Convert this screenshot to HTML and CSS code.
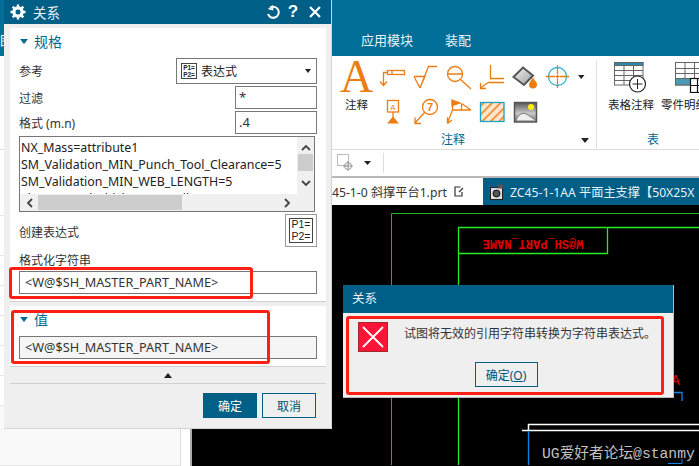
FILE: index.html
```html
<!DOCTYPE html>
<html lang="zh">
<head>
    <meta charset="UTF-8">
    <title>关系</title>
    <link rel="stylesheet" href="styles.css">
</head>
<body>
<div class="app">
    <!-- main window, mostly behind the dialog -->
    <div class="menubar">
        <span class="menu-cut">图</span>
        <span class="menu-item menu-first">应用模块</span>
        <span class="menu-item">装配</span>
    </div>

    <div class="ribbon">
        <div class="ribbon-group group-note">
            <div class="big-tool">
                <span class="big-a">A</span>
                <span class="tool-label">注释</span>
            </div>
            <svg class="note-icons" width="212" height="68" viewBox="379 60 212 68" fill="none" stroke="#ee7d11" stroke-width="1.3">
                <defs>
                    <pattern id="hatch" width="6" height="6" patternUnits="userSpaceOnUse" patternTransform="rotate(-45 0 0) translate(0 0)">
                        <rect width="6" height="6" fill="#fde6cf" stroke="none"/>
                        <line x1="0" y1="0" x2="6" y2="0" stroke="#ee7d11" stroke-width="3"/>
                    </pattern>
                    <linearGradient id="can" x1="0" y1="0" x2="1" y2="1">
                        <stop offset="0" stop-color="#f6f6f6"/>
                        <stop offset="1" stop-color="#9a9a9a"/>
                    </linearGradient>
                    <linearGradient id="photo" x1="0" y1="0" x2="0" y2="1">
                        <stop offset="0" stop-color="#555"/>
                        <stop offset="0.55" stop-color="#c8c8c8"/>
                        <stop offset="1" stop-color="#777"/>
                    </linearGradient>
                </defs>
                <!-- leader note -->
                <rect x="387.5" y="70.5" width="17" height="4"/>
                <path d="M392 70.5V74.5M387.5 72.5H383.5V85M380 81.5L383.5 85.5L387 81.5"/>
                <!-- surface finish -->
                <path d="M414 76.5H425L420 88L428.500 66.500H437"/>
                <path d="M414 76.500L420 88"/>
                <!-- datum circle -->
                <circle cx="455" cy="74" r="7.500"/>
                <path d="M447.500 74H462.500M460.500 79.500L471 89"/>
                <!-- angle -->
                <path d="M490.500 65V78.500H504M488 82.500H504M488 82.500L480.500 88M480.500 83V88.500H486"/>
                <!-- paint -->
                <path d="M523 67.500L533 75.500L524 85L513.500 77Z" fill="url(#can)" stroke="#555" stroke-width="2"/>
                <path d="M533 77.500C535 81 537 82.500 537 84.500A4 4 0 0 1 529 84.500C529 82.500 531 81 533 77.500Z" fill="#ee7d11" stroke="none"/>
                <!-- target -->
                <circle cx="557.500" cy="76.500" r="9" stroke="#25b3d6"/>
                <path d="M546 76.500H555.500M559.500 76.500H569M557.500 65V74.500M557.500 78.500V88M556 76.500H559M557.500 75V78"/>
                <path d="M578 75H584.500L581.250 79Z" fill="#222" stroke="none"/>
                <!-- id symbol -->
                <rect x="387.500" y="100.500" width="11" height="11.500"/>
                <text x="393" y="109.500" class="svg-small" text-anchor="middle">A</text>
                <path d="M393 112V118"/>
                <path d="M387 123.500L393 116.500L399 123.500Z" fill="#ee7d11" stroke="none"/>
                <!-- balloon -->
                <circle cx="430" cy="107" r="7.500"/>
                <text x="430" y="111" class="svg-small svg-seven" text-anchor="middle">7</text>
                <path d="M424.500 112.500L415 123M415 117.500V123.500H421"/>
                <!-- weld -->
                <path d="M452 100L460 103L452 105.500Z" fill="#ee7d11"/>
                <path d="M452.500 100V110L447.500 123M447.500 117.500V123.500M447.500 123.500L452 120M452.500 110H471M461.500 103.500V110M461.500 103.500L471 110"/>
                <!-- hatch -->
                <rect x="480.500" y="102.500" width="23.500" height="19" fill="url(#hatch)" stroke="#14a5c6" stroke-width="1.300"/>
                <!-- image -->
                <rect x="514.500" y="102.500" width="22" height="19.500" fill="url(#photo)" stroke="#555" stroke-width="1.500"/>
                <circle cx="531" cy="107" r="3" fill="#fff000" stroke="none"/>
                <path d="M516 121C518 113 524 112 528 115C531 117 534 119 536 121Z" fill="#eee" stroke="#777" stroke-width="1"/>
            </svg>
            <div class="group-title group-title-note">注释</div>
            <svg class="group-more" width="8" height="5" viewBox="0 0 8 5"><path d="M0 0H8L4 5Z" fill="#222"/></svg>
        </div>
        <div class="ribbon-group group-table">
            <div class="table-tool">
                <svg width="34" height="32" viewBox="614 61 34 32" fill="none" stroke="#666" stroke-width="1">
                    <rect x="614.500" y="62.500" width="28.500" height="22.500" fill="#fff"/>
                    <rect x="614.500" y="62.500" width="28.500" height="3" fill="#2c88a8"/>
                    <path d="M614.500 70.500H643M614.500 75.500H643M614.500 80.500H643M624 65.500V85M633.500 65.500V85"/>
                    <circle cx="637.500" cy="84" r="8" fill="#fff" stroke="#222" stroke-width="1.200"/>
                    <path d="M632.500 84H642.500M637.500 79V89" stroke="#222"/>
                </svg>
                <span class="tool-label">表格注释</span>
            </div>
            <div class="table-tool parts-tool">
                <svg width="29" height="32" viewBox="671 61 29 32" fill="none" stroke="#666" stroke-width="1">
                    <rect x="671.500" y="62.500" width="29" height="22.500" fill="#fff"/>
                    <path d="M671.500 68.500H700M671.500 73.500H700M671.500 78.500H700M681 62.500V85M690.500 62.500V85"/>
                    <rect x="671.500" y="78.500" width="29" height="6.500" fill="#4a9ab5"/>
                    <rect x="686.500" y="78.500" width="14" height="14" fill="#fff" stroke="#111" stroke-width="1.200"/>
                    <path d="M686.500 85.500H700M693.500 78.500V92.500" stroke="#111" stroke-width="1.200"/>
                </svg>
                <span class="tool-label">零件明细表</span>
            </div>
            <div class="group-title group-title-table">表</div>
        </div>
    </div>

    <div class="toolbar">
        <svg class="snap-icon" width="18" height="18" viewBox="0 0 18 18" fill="none" stroke="#bbb">
            <rect x="0.500" y="0.500" width="11" height="11"/>
            <circle cx="11" cy="12" r="3.500" stroke="#999"/>
            <path d="M11 7V17M6 12H16" stroke="#999"/>
        </svg>
        <svg class="snap-arrow" width="7" height="4" viewBox="0 0 7 4"><path d="M0 0H7L3.500 4Z" fill="#222"/></svg>
        <span class="toolbar-sep"></span>
    </div>

    <div class="tabs">
        <div class="tab">
            <span>45-1-0 斜撑平台1.prt</span>
            <svg class="tab-icon" width="10" height="11" viewBox="0 0 10 11" fill="none" stroke="#333" stroke-width="1.200"><path d="M6.500 1H1V10H8V6M5 6L9 2"/></svg>
        </div>
        <div class="tab tab-active">
            <svg class="tab-icon" width="14" height="16" viewBox="0 0 14 16">
                <rect x="0.500" y="3.500" width="12" height="12" fill="#ddd" stroke="#222"/>
                <rect x="8" y="0.500" width="5" height="4" fill="#555"/>
                <circle cx="6.500" cy="9.500" r="3.500" fill="#555" stroke="#111"/>
            </svg>
            <span class="tab-name">ZC45-1-1AA 平面主支撑【50X25X</span>
        </div>
    </div>

    <div class="workspace">
        <div class="sidebar">
            <div class="side-list">
                <div class="side-row side-row-tall"></div>
                <div class="side-row side-row-tall"></div>
                <div class="side-row"></div>
                <div class="side-row"></div>
                <div class="side-row"></div>
                <div class="side-row"></div>
                <div class="side-row"></div>
                <div class="side-row side-row-last"></div>
            </div>
        </div>
        <svg class="drawing" width="507" height="261" viewBox="192 205 507 261" fill="none">
            <path d="M391.500 466V214.500H699" stroke="#1fb51f" stroke-width="1"/>
            <path d="M458.500 466V228.500H699M458.500 254.500H607.500V228.500" stroke="#22ee22" stroke-width="1.300"/>
            <text x="533" y="241" class="cad-title" text-anchor="middle" transform="rotate(180 533 241)">W@SH_PART_NAME</text>
            <text x="671" y="386" class="cad-a">A</text>
            <path d="M668 393.500H682V402" stroke="#0a84e6" stroke-width="1.300"/>
            <path d="M522 431.500H699M528.500 431V425.500H699" stroke="#fff" stroke-width="1.500"/>
            <path d="M528.500 432V466" stroke="#0a84e6" stroke-width="1.300"/>
            <path d="M668 464.500H682V460" stroke="#0a84e6" stroke-width="1"/>
            <text x="542" y="459" class="cad-credit">UG爱好者论坛@stanmy</text>
        </svg>
    </div>
</div>

<!-- relations dialog -->
<div class="dialog">
    <div class="dialog-title">
        <svg class="gear" width="16" height="16" viewBox="0 0 16 16">
            <path d="M8 2.200A5.800 5.800 0 1 0 8 13.800A5.800 5.800 0 1 0 8 2.200ZM8 5.500A2.500 2.500 0 1 1 8 10.500A2.500 2.500 0 1 1 8 5.500Z" fill="#fff" fill-rule="evenodd"/>
            <path d="M8 0.500V3M8 13V15.500M0.500 8H3M13 8H15.500M2.700 2.700L4.400 4.400M11.600 11.600L13.300 13.300M2.700 13.300L4.400 11.600M11.600 4.400L13.300 2.700" stroke="#fff" stroke-width="2.400"/>
        </svg>
        <span class="dialog-name">关系</span>
        <svg class="reset" width="14" height="14" viewBox="0 0 14 14" fill="none" stroke="#fff" stroke-width="2">
            <path d="M4 2.800A5.500 5.500 0 1 1 2 9"/>
            <path d="M6.500 0.500L6.500 4.500L2.500 3.500" stroke-width="1.500"/>
        </svg>
        <span class="help">?</span>
        <svg class="close" width="12" height="12" viewBox="0 0 12 12" stroke="#fff" stroke-width="2.200"><path d="M1 1L11 11M11 1L1 11"/></svg>
    </div>

    <div class="dialog-body">
        <div class="section section-spec">
            <div class="section-head"><i class="caret"></i>规格</div>
            <div class="row row-select">
                <label>参考</label>
                <div class="select">
                    <span class="p-icon">P1=<br>P2=</span>
                    <span class="select-text">表达式</span>
                    <i class="select-arrow"></i>
                </div>
            </div>
            <div class="row">
                <label>过滤</label>
                <div class="field field-short">*</div>
            </div>
            <div class="row">
                <label>格式 (m.n)</label>
                <div class="field field-short">.4</div>
            </div>
            <div class="listbox">
                <div class="list-lines">
                    <div>NX_Mass=attribute1</div>
                    <div>SM_Validation_MIN_Punch_Tool_Clearance=5</div>
                    <div>SM_Validation_MIN_WEB_LENGTH=5</div>
                    <div>Sheet_Metal_Thickness=attribute1</div>
                </div>
                <div class="vscroll">
                    <svg width="10" height="7" viewBox="0 0 10 7" fill="none" stroke="#444" stroke-width="1.800"><path d="M1 6L5 2L9 6"/></svg>
                    <div class="vthumb"></div>
                    <svg width="10" height="7" viewBox="0 0 10 7" fill="none" stroke="#444" stroke-width="1.800"><path d="M1 1L5 5L9 1"/></svg>
                </div>
                <div class="hscroll">
                    <svg width="7" height="10" viewBox="0 0 7 10" fill="none" stroke="#444" stroke-width="1.800"><path d="M6 1L2 5L6 9"/></svg>
                    <div class="hthumb"></div>
                    <svg width="7" height="10" viewBox="0 0 7 10" fill="none" stroke="#444" stroke-width="1.800"><path d="M1 1L5 5L1 9"/></svg>
                </div>
            </div>
            <div class="row row-create">
                <label>创建表达式</label>
                <div class="create-btn"><span class="p-icon p-icon-big">P1=<br>P2=</span></div>
            </div>
            <div class="field-label">格式化字符串</div>
            <div class="field">&lt;W@$SH_MASTER_PART_NAME&gt;</div>
        </div>

        <div class="section section-value">
            <div class="section-head section-head-value"><i class="caret"></i>值</div>
            <div class="field field-readonly">&lt;W@$SH_MASTER_PART_NAME&gt;</div>
        </div>

        <div class="collapse"><i class="collapse-arrow"></i></div>

        <div class="dialog-buttons">
            <button class="btn btn-primary">确定</button>
            <button class="btn">取消</button>
        </div>
    </div>
</div>

<!-- message box -->
<div class="alert">
    <div class="alert-title">关系</div>
    <div class="alert-body">
        <div class="alert-main">
            <svg class="alert-icon" width="30" height="30" viewBox="0 0 30 30">
                <rect x="0.500" y="0.500" width="29" height="29" fill="#ff1439" stroke="#a32a2a"/>
                <path d="M5 5L25 25M25 5L5 25" stroke="#fff" stroke-width="1.800"/>
            </svg>
            <div class="alert-text">试图将无效的引用字符串转换为字符串表达式。</div>
        </div>
        <button class="btn alert-btn">确定(<u>O</u>)</button>
    </div>
</div>

<!-- red marks drawn on the screenshot -->
<div class="mark mark-format"></div>
<div class="mark mark-value"></div>
<div class="mark mark-alert"></div>
</body>
</html>
```

FILE: styles.css
```css
/* Global */
* {
    box-sizing: border-box;
}
html, body {
    margin: 0;
    height: 100%;
}
body {
    position: relative;
    width: 699px;
    height: 466px;
    overflow: hidden;
    font-family: "Noto Sans", "Noto Sans CJK SC", sans-serif;
    font-size: 12px;
    color: #333;
    background: #000;
}

/* Main window */
.app {
    display: flex;
    flex-direction: column;
    height: 466px;
}
.menubar {
    display: flex;
    align-items: flex-end;
    flex: 0 0 56px;
    padding-bottom: 7px;
    background: #006e96;
    color: #e8f2f6;
    font-size: 13px;
    line-height: 18px;
    overflow: hidden;
}
.menu-cut {
    width: 4px;
    overflow: hidden;
    color: #fff;
    white-space: nowrap;
    margin-right: 357px;
}
.menu-item {
    margin-right: 32px;
}

/* Ribbon */
.ribbon {
    display: flex;
    flex: 0 0 94px;
    background: #fff;
    border-bottom: 1px solid #ddd;
}
.ribbon-group {
    position: relative;
    display: flex;
    height: 88px;
    margin-top: 5px;
}
.group-note {
    width: 597px;
    padding-left: 334px;
    border-right: 1px solid #ddd;
}
.group-table {
    flex: 1;
    overflow: hidden;
}
.big-tool {
    display: flex;
    flex-direction: column;
    align-items: center;
    width: 45px;
}
.big-a {
    height: 32px;
    font-family: "Liberation Serif", serif;
    font-size: 46px;
    line-height: 32px;
    color: #ee7d11;
}
.big-tool .tool-label {
    margin-top: 4px;
}
.tool-label {
    font-size: 11.500px;
    line-height: 16px;
    color: #222;
    white-space: nowrap;
}
.note-icons {
    margin-top: -1px;
}
.group-title {
    position: absolute;
    top: 71px;
    font-size: 12px;
    line-height: 16px;
    color: #00698f;
}
.group-title-note {
    left: 441px;
}
.group-title-table {
    left: 50px;
}
.group-more {
    position: absolute;
    left: 581px;
    top: 77px;
}
.table-tool {
    display: flex;
    flex-direction: column;
    align-items: center;
    width: 68px;
    margin-left: -1px;
}
.table-tool svg {
    margin-bottom: 4px;
}
.group-table .table-tool:first-child {
    margin-left: 0;
}
.table-tool:first-child {
    padding-left: 0;
    flex: 0 0 68px;
}
.table-tool:first-child svg {
    margin-left: 0;
}
.parts-tool {
    align-items: flex-start;
    flex: 0 0 60px;
}
.parts-tool svg {
    margin-left: 11px;
}
.parts-tool .tool-label {
    margin-left: -3px;
}

/* Small toolbar */
.toolbar {
    display: flex;
    align-items: center;
    flex: 0 0 28px;
    padding-left: 337px;
    background: #fff;
    border-bottom: 2px solid #b9b9b9;
}
.snap-arrow {
    margin-left: 9px;
}
.toolbar-sep {
    width: 1px;
    height: 20px;
    margin-left: 12px;
    background: #ddd;
}

/* Document tabs */
.tabs {
    display: flex;
    flex: 0 0 27px;
    padding-left: 332px;
    background: #005f87;
    font-size: 12.200px;
    white-space: nowrap;
}
.tab {
    display: flex;
    align-items: center;
    gap: 7px;
    width: 151px;
    padding-left: 0;
    background: #fff;
    color: #333;
    overflow: hidden;
}
.tab-active {
    flex: 1;
    gap: 6px;
    padding-left: 7px;
    background: #005f87;
    color: #e6f1f5;
}
.tab-icon {
    flex: none;
}

/* Area under the tabs */
.workspace {
    display: flex;
    flex: 1;
    min-height: 0;
    margin-top: -1px;
}
.sidebar {
    flex: 0 0 192px;
    margin-top: -28px;
    padding-right: 9px;
    background: #fff;
    border-right: 2px solid #aaa;
}
.side-list {
    height: 100%;
    border-right: 1px solid #ddd;
}
.side-row {
    height: 30px;
    border-bottom: 1px solid #e6e6e6;
}
.side-row-tall {
    height: 40px;
}
.side-row-last {
    background: #f9f9f9;
    height: 60px;
}
.drawing {
    display: block;
    flex: 1;
}
.cad-title {
    font-family: "Liberation Mono", monospace;
    font-size: 12px;
    font-weight: bold;
    fill: #e00000;
}
.cad-a {
    font-family: "Liberation Mono", monospace;
    font-size: 15px;
    fill: #e00000;
}
.cad-credit {
    font-family: "Liberation Mono", "Noto Sans CJK SC", monospace;
    font-size: 14.700px;
    fill: #c0c0c0;
}
.svg-small {
    font-family: "Liberation Sans", sans-serif;
    font-size: 8px;
    fill: #ee7d11;
    stroke: none;
}
.svg-seven {
    font-size: 11px;
    font-weight: bold;
}

/* Relations dialog */
.dialog {
    position: absolute;
    left: 4px;
    top: 0;
    width: 328px;
    height: 429px;
    background: #efefef;
    border-right: 1px solid #d4d4d4;
    border-bottom: 1px solid #d4d4d4;
}
.dialog-title {
    display: flex;
    align-items: center;
    height: 24px;
    padding-left: 6px;
    background: #005f87;
    color: #e8f2f6;
}
.dialog-name {
    margin-left: 7px;
    font-size: 13.500px;
}
.reset {
    margin-left: auto;
}
.help {
    width: 12px;
    margin-left: 7px;
    font-family: "Liberation Sans", sans-serif;
    font-size: 17px;
    font-weight: bold;
    line-height: 24px;
    text-align: center;
    color: #fff;
}
.close {
    margin: 0 10px 0 10px;
}
.dialog-body {
    padding: 4px 5px 0 6px;
}
.section {
    padding: 0 9px 7px;
    background: #fff;
    border-bottom: 1px solid #d0d0d0;
}
.section-head {
    display: flex;
    align-items: center;
    height: 26px;
    margin-bottom: 4px;
    font-size: 14px;
    color: #00698f;
}
.caret {
    width: 0;
    height: 0;
    margin: 0 6px 0 1px;
    border-left: 4.500px solid transparent;
    border-right: 4.500px solid transparent;
    border-top: 5px solid #00698f;
}
.row {
    display: flex;
    align-items: center;
    justify-content: space-between;
    height: 23px;
    margin-bottom: 2px;
    font-size: 12px;
    color: #333;
}
.row-select {
    height: 26px;
}
.select {
    display: flex;
    align-items: center;
    width: 141px;
    height: 26px;
    padding-left: 4px;
    border: 1px solid #777;
    background: #fff;
}
.p-icon {
    display: block;
    width: 16px;
    height: 16px;
    border: 1px solid #444;
    font-family: "Liberation Sans", sans-serif;
    font-size: 6.500px;
    font-weight: bold;
    line-height: 7px;
    color: #222;
    text-align: center;
}
.select-text {
    margin-left: 4px;
    color: #222;
}
.select-arrow {
    margin-left: auto;
    margin-right: 5px;
    border-left: 3.500px solid transparent;
    border-right: 3.500px solid transparent;
    border-top: 4px solid #222;
}
.field {
    height: 23px;
    padding: 0 5px;
    border: 1px solid #777;
    background: #fff;
    font-size: 12.700px;
    line-height: 21px;
    color: #333;
    white-space: nowrap;
}
.field-short {
    width: 82px;
    padding: 0 3px;
    font-size: 13px;
}

.field-readonly {
    background: #f5f5f5;
}

/* Expression list */
.listbox {
    display: grid;
    grid-template-columns: 1fr 17px;
    grid-template-rows: 57px 17px;
    width: 296px;
    height: 76px;
    margin-bottom: 2px;
    border: 1px solid #777;
    background: #f0f0f0;
}
.list-lines {
    padding: 2px 0 0 1px;
    overflow: hidden;
    background: #fff;
    font-size: 12.400px;
    line-height: 17px;
    color: #222;
    white-space: nowrap;
}
.vscroll {
    display: flex;
    flex-direction: column;
    align-items: center;
    padding-top: 7px;
}
.vthumb {
    width: 15px;
    height: 17px;
    margin: 3px 0 9px;
    background: #cdcdcd;
}
.hscroll {
    display: flex;
    align-items: center;
    grid-column: 1 / 3;
    padding-left: 6px;
}
.hthumb {
    width: 144px;
    height: 15px;
    margin: 0 102px 0 5px;
    background: #cdcdcd;
}
.row-create {
    height: 33px;
    margin-bottom: 4px;
}
.row-create label {
    margin-top: 2px;
}
.create-btn {
    width: 32px;
    height: 33px;
    padding: 3px;
    border: 1px solid #999;
    background: #fff;
}
.p-icon-big {
    width: 24px;
    height: 25px;
    font-size: 10.500px;
    font-weight: normal;
    line-height: 11.500px;
}
.field-label {
    height: 20px;
    font-size: 12px;
    line-height: 19px;
    color: #333;
}
.section-value {
    margin-top: 4px;
}
.section-head-value {
    margin-bottom: 4px;
}
.collapse {
    display: flex;
    align-items: center;
    justify-content: center;
    height: 17px;
    border-bottom: 1px solid #cfcfcf;
}
.collapse-arrow {
    border-left: 4.500px solid transparent;
    border-right: 4.500px solid transparent;
    border-top: 0;
    border-bottom: 5px solid #222;
}
.dialog-buttons {
    display: flex;
    justify-content: flex-end;
    gap: 5px;
    padding: 9px 10px 0 0;
}
.btn {
    width: 54px;
    height: 25px;
    padding: 0;
    border: 1px solid #005f87;
    border-radius: 0;
    background: #efefef;
    font-family: "Noto Sans", "Noto Sans CJK SC", sans-serif;
    font-size: 12px;
    color: #00506f;
}
.btn-primary {
    background: #005f87;
    color: #fff;
}

/* Message box */
.alert {
    position: absolute;
    left: 343px;
    top: 285px;
    width: 331px;
    height: 113px;
    background: #efefef;
    border-right: 1px solid #bbb;
    border-bottom: 1px solid #bbb;
}
.alert-title {
    height: 28px;
    padding-left: 9px;
    background: #005f87;
    font-size: 12.500px;
    line-height: 28px;
    color: #e8f2f6;
}
.alert-body {
    display: flex;
    flex-direction: column;
    align-items: center;
    padding: 9px 0 0 0;
}
.alert-main {
    display: flex;
    align-self: flex-start;
    padding-left: 15px;
}
.alert-icon {
    flex: none;
}
.alert-text {
    margin: 4px 0 0 16px;
    font-size: 12px;
    line-height: 16px;
    white-space: nowrap;
    color: #333;
}
.alert-btn {
    width: 63px;
    margin: 10px 0 0 -4px;
}

/* Red annotation frames */
.mark {
    position: absolute;
    border: 3px solid #ff2015;
    border-radius: 3px;
}
.mark-format {
    left: 9px;
    top: 267px;
    width: 244px;
    height: 32px;
}
.mark-value {
    left: 11px;
    top: 310px;
    width: 259px;
    height: 54px;
}
.mark-alert {
    left: 346px;
    top: 316px;
    width: 318px;
    height: 79px;
}
```
